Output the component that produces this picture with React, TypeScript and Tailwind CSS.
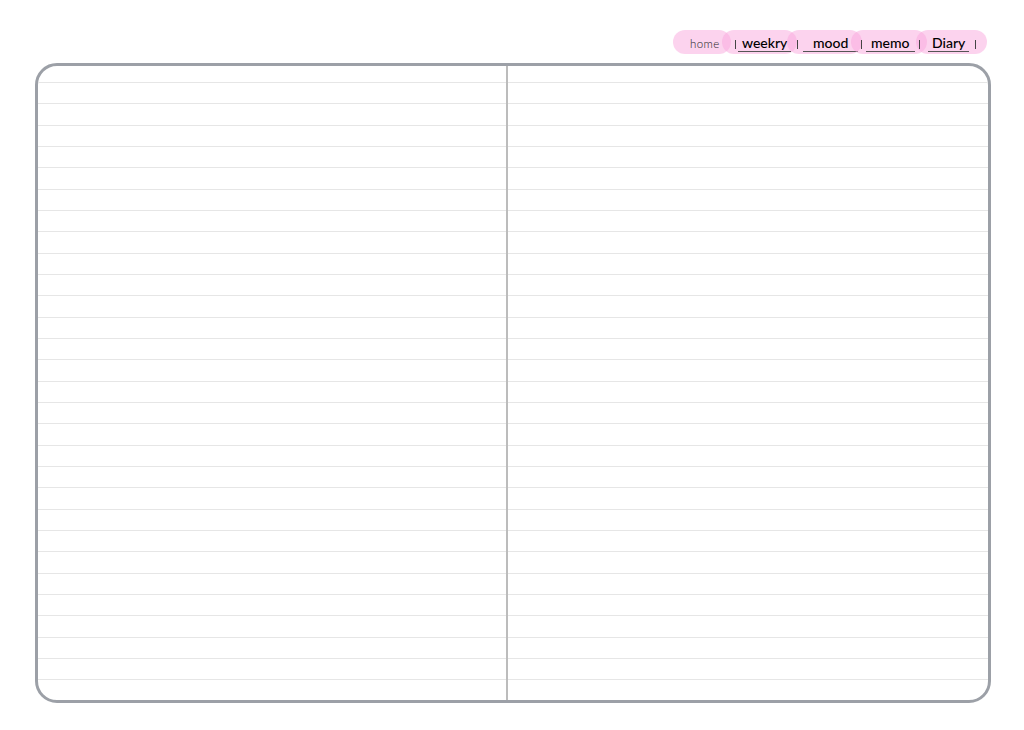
import React from "react";

const rows = Array.from({ length: 29 }, (_, i) => i);

function Sep() {
  return <span className="inline-block w-[1px] h-[9px] bg-[#444] shrink-0" />;
}

function Pane({ className }: { className: string }) {
  return (
    <div className={`flex flex-col pt-[16px] ${className}`}>
      {rows.map((r) => (
        <div key={r} className="h-[21.33px] shrink-0 border-t border-[#e6e6e6]" />
      ))}
    </div>
  );
}

export default function App() {
  const pill = "h-[24px] rounded-full bg-[rgba(249,167,221,0.5)] flex items-center shrink-0 pt-[4px]";
  const word = "border-b border-[#555] leading-[14px] pb-[1px] text-[14px] font-medium text-black";
  return (
    <div
      className="w-[1024px] h-[730px] bg-white overflow-hidden pt-[30px]"
      style={{ fontFamily: "Lato, 'DejaVu Sans', sans-serif" }}
    >
      <div className="flex justify-end pr-[37px] h-[24px]">
        <div className={`${pill} w-[58px] pl-[17px] pt-[2px]`}>
          <span className="text-[11.5px] font-light text-[#222] tracking-[0.4px]">home</span>
        </div>
        <div className={`${pill} w-[75px] -ml-[9px] pl-[13px] gap-[2px]`}>
          <Sep />
          <span className={`${word} px-[4px]`}>weekry</span>
        </div>
        <div className={`${pill} w-[75px] -ml-[10px] pl-[10px] gap-[5px]`}>
          <Sep />
          <span className={`${word} px-[10px]`}>mood</span>
        </div>
        <div className={`${pill} w-[76px] -ml-[11px] pl-[10px] gap-[4px]`}>
          <Sep />
          <span className={`${word} px-[5px]`}>memo</span>
        </div>
        <div className={`${pill} w-[71px] -ml-[11px] pl-[3px] gap-[8px]`}>
          <Sep />
          <span className={`${word} px-[4px]`}>Diary</span>
          <span className="ml-[-2px] flex"><Sep /></span>
        </div>
      </div>
      <div className="mt-[9px] ml-[35px] w-[956px] h-[640px] border-[3px] border-[#9ca0a7] rounded-[22px] overflow-hidden flex">
        <Pane className="w-[468px]" />
        <div className="w-[2px] bg-[#bcbcbc] shrink-0" />
        <Pane className="flex-1" />
      </div>
    </div>
  );
}
